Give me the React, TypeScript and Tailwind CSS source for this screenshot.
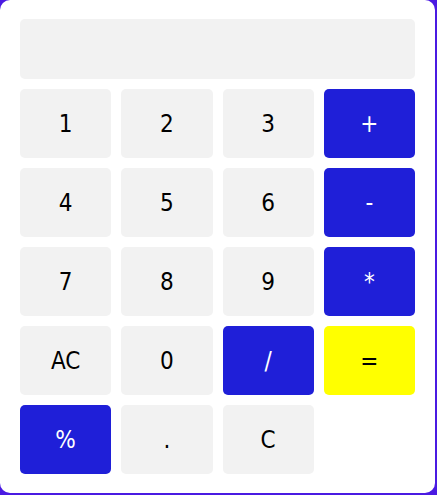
import React from "react";

type B = { label: string; kind: "n" | "o" | "e" };

const buttons: B[] = [
  { label: "1", kind: "n" },
  { label: "2", kind: "n" },
  { label: "3", kind: "n" },
  { label: "+", kind: "o" },
  { label: "4", kind: "n" },
  { label: "5", kind: "n" },
  { label: "6", kind: "n" },
  { label: "-", kind: "o" },
  { label: "7", kind: "n" },
  { label: "8", kind: "n" },
  { label: "9", kind: "n" },
  { label: "*", kind: "o" },
  { label: "AC", kind: "n" },
  { label: "0", kind: "n" },
  { label: "/", kind: "o" },
  { label: "=", kind: "e" },
  { label: "%", kind: "o" },
  { label: ".", kind: "n" },
  { label: "C", kind: "n" },
];

export default function App() {
  return (
    <div className="w-[437px] h-[495px] bg-[#4a1ae2]" style={{ fontFamily: '"DejaVu Sans Condensed", "DejaVu Sans", sans-serif' }}>
      <div className="w-[435px] h-[493px] bg-white rounded-[10px] pt-[19px] px-[20px]">
        <div className="h-[60px] rounded-[5px] bg-[#f2f2f2] mb-[10px]" />
        <div className="grid grid-cols-4 gap-[10px] auto-rows-[69px]">
          {buttons.map((b) => (
            <div
              key={b.label}
              className={
                "flex items-center justify-center rounded-[5px] text-[24px] pt-[1px] " +
                (b.kind === "o"
                  ? "bg-[#1f1fd8] text-white"
                  : b.kind === "e"
                  ? "bg-[#ffff00] text-black"
                  : "bg-[#f2f2f2] text-black")
              }
            >
              {b.label}
            </div>
          ))}
        </div>
      </div>
    </div>
  );
}
